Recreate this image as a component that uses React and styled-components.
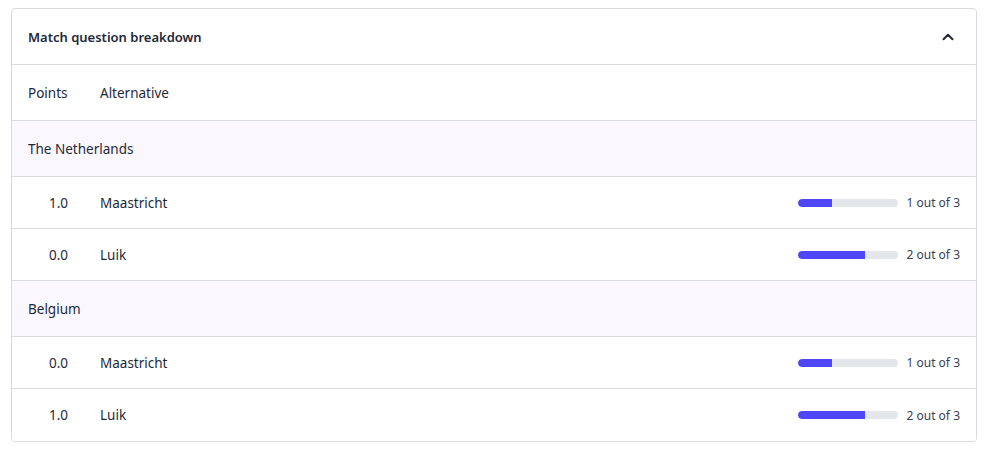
import styled, { createGlobalStyle } from 'styled-components';

const GlobalStyle = createGlobalStyle`
  body {
    margin: 8px 10px 0 11px;
    font-family: 'Noto Sans', 'Open Sans', sans-serif;
    color: #1f2937;
    background: #ffffff;
  }
`;

const Card = styled.section`
  border: 1px solid #d8dbe0;
  border-radius: 4px;
  overflow: hidden;
  background: #fff;
`;

const Header = styled.div`
  height: 55px;
  display: flex;
  align-items: center;
  justify-content: space-between;
  padding: 0 19px 0 16px;
  border-bottom: 1px solid #d8dbe0;
`;

const Title = styled.h3`
  margin: 0;
  font-size: 13px;
  font-weight: 600;
  color: #1f2937;
`;

const Row = styled.div`
  display: grid;
  grid-template-columns: 40px 1fr auto;
  column-gap: 32px;
  align-items: center;
  height: ${({ tall, last }) => (tall ? '55px' : last ? '52px' : '51px')};
  padding: 0 16px;
  font-size: 13.5px;
  background: ${({ group }) => (group ? '#faf8fe' : '#fff')};
  border-bottom: ${({ last }) => (last ? 'none' : '1px solid #d8dbe0')};
`;

const Points = styled.span`
  text-align: right;
`;

const GroupName = styled.span`
  grid-column: 1 / -1;
`;

const Stat = styled.div`
  display: flex;
  align-items: center;
  gap: 8px;
  font-size: 12px;
  color: #374151;
`;

const Track = styled.div`
  width: 100px;
  height: 8px;
  border-radius: 4px;
  background: #e3e6ea;
  overflow: hidden;
`;

const Fill = styled.div`
  height: 100%;
  background: #4f46f5;
  border-radius: 4px 0 0 4px;
`;

const Chevron = () => (
  <svg width="18" height="18" viewBox="0 0 24 24" fill="none" stroke="#1f2937" strokeWidth="2.6" strokeLinecap="round" strokeLinejoin="round">
    <path d="M6 15l6-6 6 6" />
  </svg>
);

const groups = [
  {
    name: 'The Netherlands',
    items: [
      { points: '1.0', alt: 'Maastricht', count: 1 },
      { points: '0.0', alt: 'Luik', count: 2 },
    ],
  },
  {
    name: 'Belgium',
    items: [
      { points: '0.0', alt: 'Maastricht', count: 1 },
      { points: '1.0', alt: 'Luik', count: 2 },
    ],
  },
];

export default function App() {
  const total = 3;
  return (
    <>
      <GlobalStyle />
      <Card>
        <Header>
          <Title>Match question breakdown</Title>
          <Chevron />
        </Header>
        <Row tall>
          <span>Points</span>
          <span>Alternative</span>
        </Row>
        {groups.map((g, gi) => (
          <div key={g.name}>
            <Row tall group>
              <GroupName>{g.name}</GroupName>
            </Row>
            {g.items.map((it, ii) => (
              <Row key={ii} last={gi === groups.length - 1 && ii === g.items.length - 1}>
                <Points>{it.points}</Points>
                <span>{it.alt}</span>
                <Stat>
                  <Track>
                    <Fill style={{ width: `${(it.count / total) * 100}%` }} />
                  </Track>
                  <span>{it.count} out of {total}</span>
                </Stat>
              </Row>
            ))}
          </div>
        ))}
      </Card>
    </>
  );
}
